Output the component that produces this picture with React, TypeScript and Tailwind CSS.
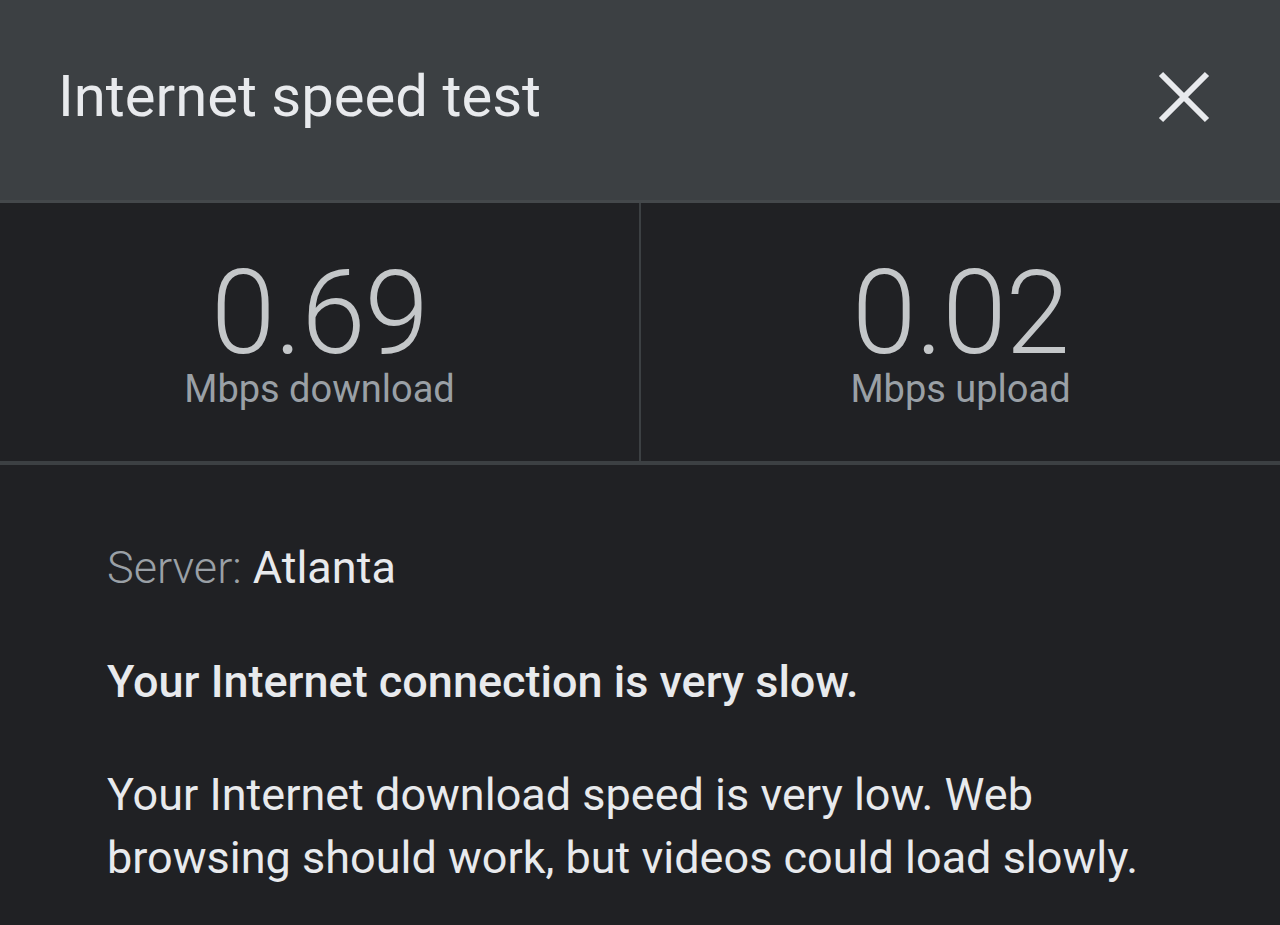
function Stat({ value, label }: { value: string; label: string }) {
  return (
    <div className="flex-1 flex flex-col items-center pt-[60px]">
      <div className="text-[116px] font-light leading-[100px] text-[#c4c7c9] tracking-[-1px]">{value}</div>
      <div className="text-[38px] leading-[44px] text-[#9aa0a6] mt-[4px]">{label}</div>
    </div>
  );
}

export default function App() {
  return (
    <div className="w-[1280px] h-[925px] bg-[#202124] overflow-hidden" style={{ fontFamily: 'Roboto, "Noto Sans", sans-serif' }}>
      {/* Header */}
      <div className="h-[203px] bg-[#3c4043] border-b-[3px] border-[#44484b] flex items-center justify-between pl-[58px] pr-[68px]">
        <h1 className="text-[58px] leading-none text-[#e8eaed] -mt-[8px]">Internet speed test</h1>
        <svg width="56" height="56" viewBox="0 0 56 56" className="-mt-[7px]">
          <path d="M5 5 L51 51 M51 5 L5 51" stroke="#e8eaed" strokeWidth="6" />
        </svg>
      </div>

      {/* Speeds */}
      <div className="flex h-[262px] border-b-[4px] border-[#3c4043]">
        <Stat value="0.69" label="Mbps download" />
        <div className="w-[2px] bg-[#3c4043]" />
        <Stat value="0.02" label="Mbps upload" />
      </div>

      {/* Details */}
      <div className="pl-[107px] pr-[60px] pt-[77px] text-[45px] text-[#e8eaed]">
        <p className="leading-[52px]">
          <span className="font-light text-[#9aa0a6]">Server: </span>
          <span>Atlanta</span>
        </p>
        <p className="mt-[62px] leading-[52px] font-medium">Your Internet connection is very slow.</p>
        <p className="mt-[55px] leading-[63px] max-w-[1040px]">
          Your Internet download speed is very low. Web browsing should work, but videos could load slowly.
        </p>
      </div>
    </div>
  );
}
